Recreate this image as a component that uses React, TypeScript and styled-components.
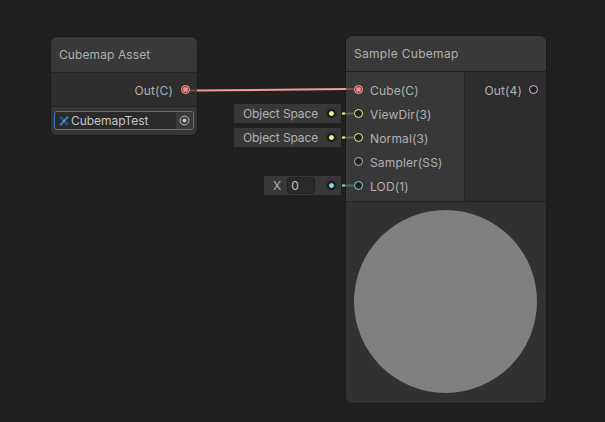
import React from "react";
import styled, { createGlobalStyle } from "styled-components";

const Global = createGlobalStyle`
  html, body { margin: 0; padding: 0; background: #202020; }
  body { font-family: Inter, "Liberation Sans", sans-serif; overflow: hidden; }
`;

const Canvas = styled.div`
  position: relative;
  width: 605px;
  height: 422px;
  background: #202020;
  overflow: hidden;
  color: #b0b0b0;
  font-size: 12px;
  letter-spacing: 0.15px;
  white-space: nowrap;
`;

const Wires = styled.svg`
  position: absolute;
  inset: 0;
  z-index: 2;
  pointer-events: none;
`;

const Node = styled.div<{ $x: number; $y: number; $w: number; $h: number }>`
  position: absolute;
  left: ${(p) => p.$x}px;
  top: ${(p) => p.$y}px;
  width: ${(p) => p.$w}px;
  height: ${(p) => p.$h}px;
  display: flex;
  flex-direction: column;
  box-sizing: border-box;
  border-radius: 6px;
  background: #2d2d2d;
  box-shadow: 0 0 0 1px #191919;
`;

const Header = styled.div<{ $spacing: number }>`
  height: 36px;
  flex: none;
  box-sizing: border-box;
  display: flex;
  align-items: center;
  padding-left: 8px;
  background: #393939;
  border-radius: 6px 6px 0 0;
  border-bottom: 1px solid #232323;
  font-size: 12px;
  letter-spacing: ${(p) => p.$spacing}px;
  color: #b0b0b0;
`;

const OutRow = styled.div`
  height: 34px;
  flex: none;
  box-sizing: border-box;
  display: flex;
  align-items: center;
  justify-content: flex-end;
  gap: 8px;
  padding-right: 7px;
  background: #2e2e2e;
  border-bottom: 1px solid #232323;
`;

const Port = styled.span<{ $color: string; $filled?: boolean; $lift?: number }>`
  width: 9px;
  height: 9px;
  flex: none;
  box-sizing: border-box;
  border-radius: 50%;
  border: 1.5px solid ${(p) => p.$color};
  background: ${(p) => (p.$filled ? p.$color : "#1f1f1f")};
  box-shadow: ${(p) => (p.$filled ? "inset 0 0 0 1px #5a3434" : "none")};
  margin-bottom: ${(p) => p.$lift ?? 2}px;
  position: relative;
  z-index: 3;
`;

const FieldArea = styled.div`
  flex: 1;
  padding: 4px 3px 0 3px;
  background: #353535;
  border-radius: 0 0 6px 6px;
`;

const ObjectField = styled.div`
  height: 19px;
  box-sizing: border-box;
  display: flex;
  align-items: center;
  border: 1px solid #3a79bb;
  border-radius: 3px;
  background: #2a2a2a;
  padding-left: 3px;
  gap: 1px;
`;

const FieldLabel = styled.span`
  flex: 1;
  color: #c4c4c4;
  letter-spacing: -0.05px;
`;

const PickerButton = styled.span`
  width: 17px;
  align-self: stretch;
  display: flex;
  align-items: center;
  justify-content: center;
  background: #3a3a3a;
  border-radius: 0 2px 2px 0;
`;

const Body = styled.div`
  height: 130px;
  flex: none;
  display: flex;
  box-sizing: border-box;
  border-bottom: 1px solid #232323;
`;

const InputColumn = styled.div`
  width: 119px;
  flex: none;
  box-sizing: border-box;
  display: flex;
  flex-direction: column;
  padding: 6px 0 0 8px;
  background: #383838;
  border-right: 1px solid #232323;
`;

const OutputColumn = styled.div`
  flex: 1;
  display: flex;
  justify-content: flex-end;
  align-items: flex-start;
  padding: 6px 8px 0 0;
  background: #2d2d2d;
`;

const InputRow = styled.div`
  position: relative;
  height: 24px;
  display: flex;
  align-items: center;
  gap: 7px;
`;

const OutputRow = styled.div`
  height: 24px;
  display: flex;
  align-items: center;
  gap: 7px;
`;

const PortLabel = styled.span`
  color: #b0b0b0;
  padding-top: 1px;
`;

const Chip = styled.div<{ $w: number }>`
  position: absolute;
  right: calc(100% + 13px);
  top: 2px;
  width: ${(p) => p.$w}px;
  height: 19px;
  box-sizing: border-box;
  display: flex;
  align-items: center;
  padding-left: 9px;
  background: #383838;
  gap: 6px;
  color: #b0b0b0;
`;

const ChipText = styled.span`
  flex: 1;
  letter-spacing: -0.1px;
`;

const ChipDot = styled.span<{ $color: string }>`
  width: 9px;
  height: 9px;
  margin-right: 5px;
  flex: none;
  box-sizing: border-box;
  border-radius: 50%;
  background: ${(p) => p.$color};
  border: 2px solid #1e1e1e;
  outline: 1px solid #2a2a2a;
  background-clip: padding-box;
`;

const NumberBox = styled.span`
  width: 30px;
  height: 17px;
  box-sizing: border-box;
  display: flex;
  align-items: center;
  padding-left: 3px;
  background: #2a2a2a;
  border: 1px solid #212121;
  border-radius: 3px;
  color: #c4c4c4;
`;

const Preview = styled.div`
  flex: 1;
  display: flex;
  align-items: center;
  justify-content: center;
  background: #313131;
  border-radius: 0 0 6px 6px;
`;

const Sphere = styled.div`
  width: 183px;
  height: 183px;
  border-radius: 50%;
  background: #808080;
  margin: 0 1px 2px 0;
`;

const CubeIcon = () => (
  <svg width="12" height="12" viewBox="0 0 12 12">
    <path d="M1 2.5 L3.5 1 L11 9 L8.5 11 Z" fill="#24507f" />
    <path d="M11 2 L9 1 L1.5 9.5 L3 11 Z" fill="#3a78b8" />
    <path d="M5 5 L7 5 L7 7 L5 7 Z" fill="#5b9bd8" />
  </svg>
);

const TargetIcon = () => (
  <svg width="11" height="11" viewBox="0 0 11 11">
    <circle cx="5.5" cy="5.5" r="4.4" fill="none" stroke="#c2c2c2" strokeWidth="1" />
    <circle cx="5.5" cy="5.5" r="2" fill="#c2c2c2" />
  </svg>
);

const inputs = [
  { label: "Cube(C)", color: "#f48e8e", filled: true },
  { label: "ViewDir(3)", color: "#f4f28a", chip: "Object Space" },
  { label: "Normal(3)", color: "#f4f28a", chip: "Object Space" },
  { label: "Sampler(SS)", color: "#b8b8b8" },
  { label: "LOD(1)", color: "#7fdbe4", num: "0" },
];

const stubs = [
  { y: 113.5, color: "#f4f28a", dim: "#65664a" },
  { y: 137.5, color: "#f4f28a", dim: "#65664a" },
  { y: 185.5, color: "#7fdbe4", dim: "#42686b" },
];

export default function App() {
  return (
    <Canvas>
      <Global />
      <Node $x={51} $y={37} $w={146} $h={98}>
        <Header $spacing={0.1}>Cubemap Asset</Header>
        <OutRow>
          <PortLabel>Out(C)</PortLabel>
          <Port $color="#f48e8e" $filled $lift={0} />
        </OutRow>
        <FieldArea>
          <ObjectField>
            <CubeIcon />
            <FieldLabel>CubemapTest</FieldLabel>
            <PickerButton>
              <TargetIcon />
            </PickerButton>
          </ObjectField>
        </FieldArea>
      </Node>

      <Node $x={346} $y={36} $w={200} $h={367}>
        <Header $spacing={0.3}>Sample Cubemap</Header>
        <Body>
          <InputColumn>
            {inputs.map((i) => (
              <InputRow key={i.label}>
                {i.chip && (
                  <Chip $w={107}>
                    <ChipText>{i.chip}</ChipText>
                    <ChipDot $color={i.color} />
                  </Chip>
                )}
                {i.num && (
                  <Chip $w={77}>
                    <span>X</span>
                    <NumberBox>{i.num}</NumberBox>
                    <ChipText />
                    <ChipDot $color={i.color} />
                  </Chip>
                )}
                <Port $color={i.color} $filled={i.filled} />
                <PortLabel>{i.label}</PortLabel>
              </InputRow>
            ))}
          </InputColumn>
          <OutputColumn>
            <OutputRow>
              <PortLabel>Out(4)</PortLabel>
              <Port $color="#e6b4ea" />
            </OutputRow>
          </OutputColumn>
        </Body>
        <Preview>
          <Sphere />
        </Preview>
      </Node>

      <Wires width="605" height="422" viewBox="0 0 605 422">
        <line x1="190" y1="90.5" x2="197" y2="90.5" stroke="#6d4a4a" strokeWidth="2" />
        <line x1="197" y1="90.5" x2="346" y2="89" stroke="#f49a9a" strokeWidth="2" />
        <line x1="346" y1="89" x2="354" y2="89" stroke="#7a5252" strokeWidth="2" />
        {stubs.map((s) => (
          <g key={s.y}>
            <line x1="342" y1={s.y} x2="345" y2={s.y} stroke={s.color} strokeWidth="2" />
            <line x1="345" y1={s.y} x2="354" y2={s.y} stroke={s.dim} strokeWidth="2" />
          </g>
        ))}
      </Wires>
    </Canvas>
  );
}
